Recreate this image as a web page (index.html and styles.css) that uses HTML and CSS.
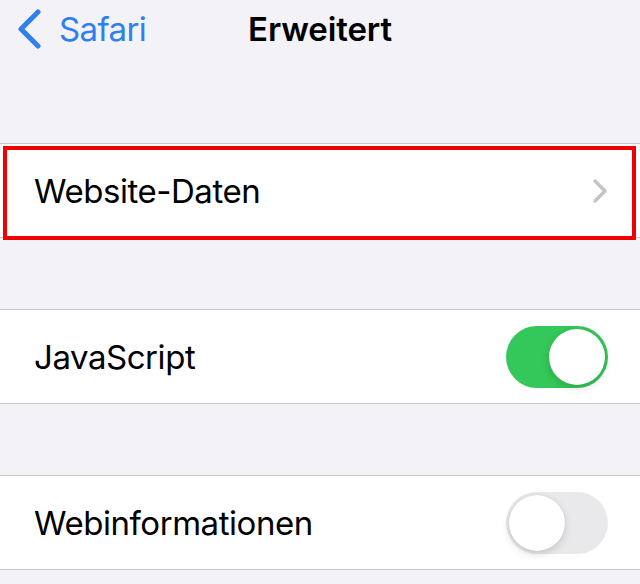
FILE: index.html
```html
<!DOCTYPE html>
<html lang="de">
<head>
<meta charset="utf-8">
<link rel="stylesheet" href="styles.css">
</head>
<body>
<header class="nav">
  <a class="back">
    <svg class="back-icon" width="26" height="40" viewBox="0 0 26 40"><polyline points="21,3 4,20 21,37" fill="none" stroke="#2f7ff1" stroke-width="5" stroke-linecap="round" stroke-linejoin="round"/></svg>
    <span class="back-label">Safari</span>
  </a>
  <h1 class="title">Erweitert</h1>
</header>
<main class="content">
  <section class="group">
    <div class="row">
      <span class="label">Website-Daten</span>
      <svg class="chevron" width="16" height="26" viewBox="0 0 16 26"><polyline points="3,3 13,13 3,23" fill="none" stroke="#c4c4c7" stroke-width="3.4" stroke-linecap="round" stroke-linejoin="round"/></svg>
      <div class="highlight"></div>
    </div>
  </section>
  <section class="group">
    <div class="row">
      <span class="label">JavaScript</span>
      <div class="toggle on"><div class="knob"></div></div>
    </div>
  </section>
  <section class="group">
    <div class="row">
      <span class="label">Webinformationen</span>
      <div class="toggle"><div class="knob"></div></div>
    </div>
  </section>
</main>
</body>
</html>
```
FILE: styles.css
```css
* { box-sizing: border-box; }
html, body { margin: 0; padding: 0; }
body {
  background: #f2f2f7;
  font-family: Inter, Roboto, "Liberation Sans", sans-serif;
  color: #000;
  width: 640px;
  height: 584px;
  overflow: hidden;
}
.nav {
  position: relative;
  height: 58px;
  display: flex;
  align-items: center;
  justify-content: center;
}
.back {
  position: absolute;
  left: 17px;
  top: 9px;
  display: flex;
  align-items: center;
  gap: 16px;
  color: #2f7ff1;
}
.back-icon { display: block; }
.back-label {
  font-size: 33px;
  letter-spacing: -0.6px;
}
.title {
  margin: 0;
  font-size: 33px;
  font-weight: 600;
  letter-spacing: -0.1px;
}
.content {
  padding-top: 85px;
  display: flex;
  flex-direction: column;
  gap: 71px;
}
.group {
  background: #fff;
  border-top: 1px solid #c8c7cc;
  border-bottom: 1px solid #c8c7cc;
}
.row {
  position: relative;
  height: 93px;
  display: flex;
  align-items: center;
  justify-content: space-between;
  padding: 0 32px 0 34px;
}
.label {
  font-size: 33px;
  letter-spacing: -0.45px;
}
.chevron { display: block; }
.highlight {
  position: absolute;
  left: 3px;
  right: 4px;
  top: 2px;
  bottom: -3px;
  border: 4px solid #f00000;
  pointer-events: none;
}
.toggle {
  width: 102px;
  height: 62px;
  border-radius: 31px;
  background: #e9e9eb;
  position: relative;
}
.toggle.on { background: #34c759; }
.knob {
  position: absolute;
  top: 3px;
  left: 3px;
  width: 56px;
  height: 56px;
  border-radius: 50%;
  background: #fff;
  box-shadow: 0 3px 8px rgba(0,0,0,0.15), 0 0 1px rgba(0,0,0,0.16);
}
.toggle.on .knob { left: 43px; }
```
